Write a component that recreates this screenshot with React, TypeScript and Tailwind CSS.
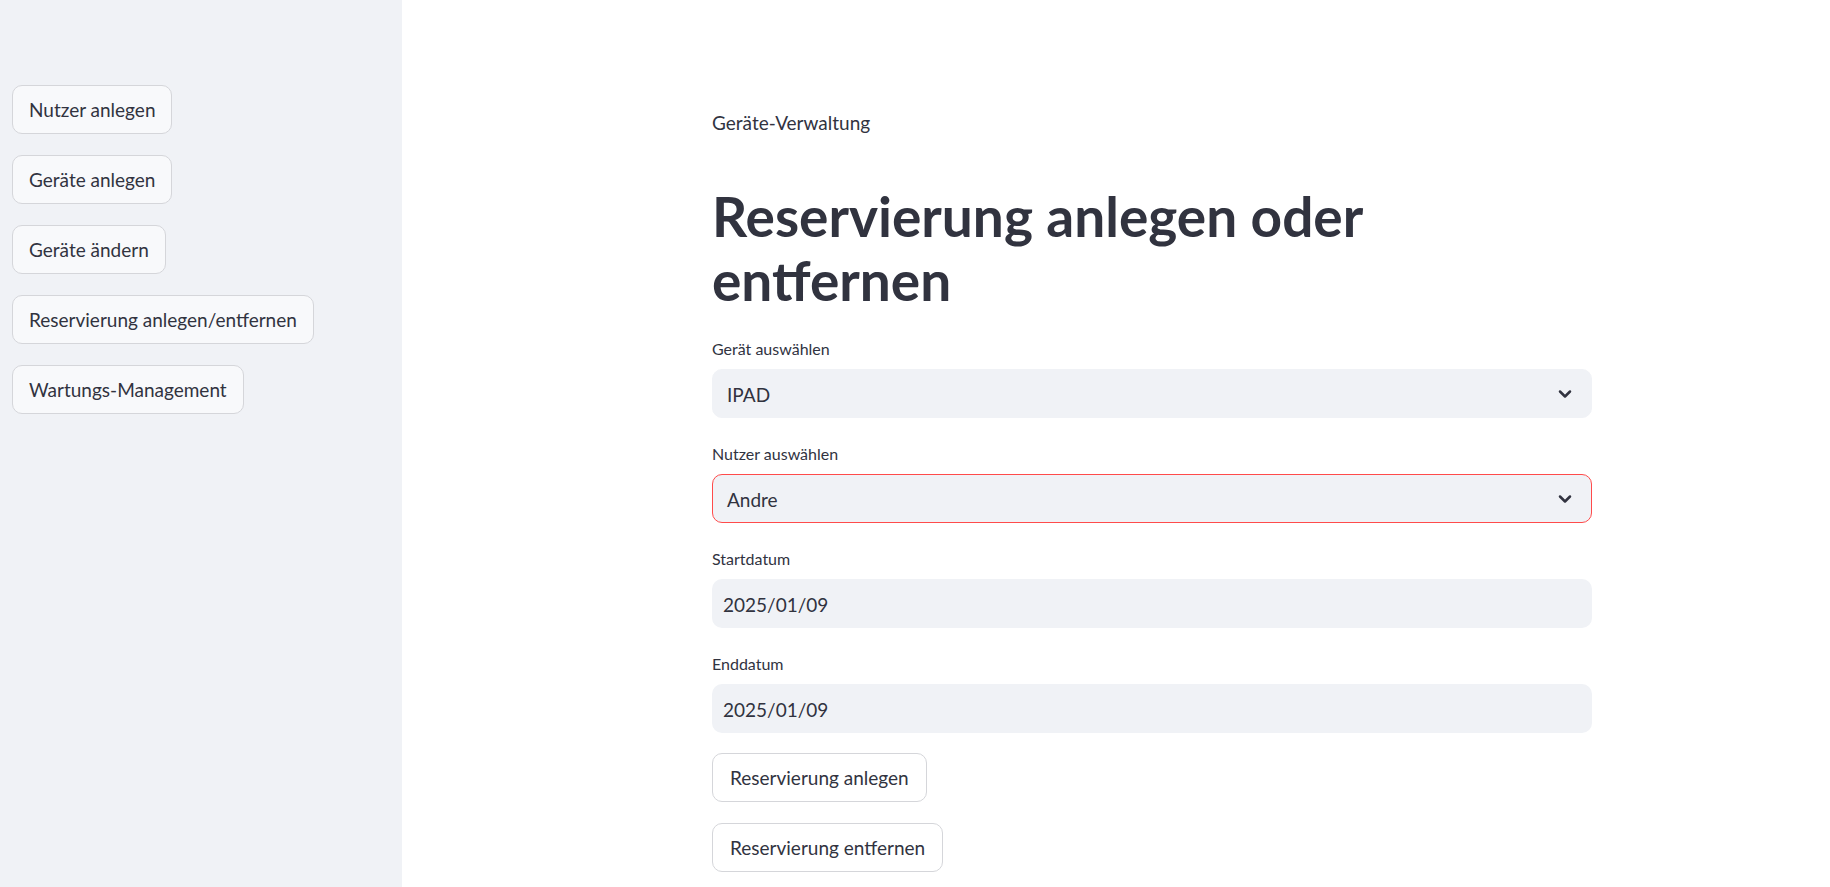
import { ChevronDown } from "lucide-react"

const font = { fontFamily: "Lato, 'Noto Sans', sans-serif" }

const navItems = [
  "Nutzer anlegen",
  "Geräte anlegen",
  "Geräte ändern",
  "Reservierung anlegen/entfernen",
  "Wartungs-Management",
]

function SelectBox({ label, value, error }: { label: string; value: string; error?: boolean }) {
  return (
    <div className="flex flex-col">
      <label className="h-6 text-[16px] leading-6 text-[#31333f]">{label}</label>
      <div
        className={`mt-2 flex h-[49px] items-center justify-between rounded-[10px] border bg-[#f0f2f6] pl-[14px] pr-[16px] pt-[3px] text-[19px] text-[#31333f] ${
          error ? "border-[#ff4b4b]" : "border-[#f0f2f6]"
        }`}
      >
        <span>{value}</span>
        <ChevronDown className="-mt-[3px] h-5 w-5 text-[#31333f]" strokeWidth={3} />
      </div>
    </div>
  )
}

function DateBox({ label, value }: { label: string; value: string }) {
  return (
    <div className="flex flex-col">
      <label className="h-6 text-[16px] leading-6 text-[#31333f]">{label}</label>
      <div className="mt-2 flex h-[49px] items-center rounded-[10px] bg-[#f0f2f6] pl-[11px] pt-[3px] text-[19px] text-[#31333f]">
        {value}
      </div>
    </div>
  )
}

export default function App() {
  return (
    <div className="flex h-[887px] w-full bg-white" style={font}>
      {/* Sidebar */}
      <aside className="flex w-[402px] shrink-0 flex-col items-start gap-[21px] bg-[#f0f2f6] pl-3 pt-[85px]">
        {navItems.map((item) => (
          <button
            key={item}
            className="h-[49px] rounded-[10px] border border-[#d5d6da] bg-[#f8f9fb] px-[16px] pt-[2px] text-[19px] text-[#31333f]"
          >
            {item}
          </button>
        ))}
      </aside>

      {/* Main */}
      <main className="flex-1 pl-[310px]">
        <div className="flex w-[880px] flex-col">
          <p className="mt-[109px] h-7 text-[19px] leading-7 text-[#31333f]">Geräte-Verwaltung</p>
          <h1 className="mt-[47px] w-[700px] text-[55px] font-bold leading-[64px] text-[#31333f]">
            Reservierung anlegen oder entfernen
          </h1>
          <div className="mt-[25px] flex flex-col gap-6">
            <SelectBox label="Gerät auswählen" value="IPAD" />
            <SelectBox label="Nutzer auswählen" value="Andre" error />
            <DateBox label="Startdatum" value="2025/01/09" />
            <DateBox label="Enddatum" value="2025/01/09" />
          </div>
          <div className="mt-[20px] flex flex-col items-start gap-[21px]">
            <button className="h-[49px] rounded-[10px] border border-[#d5d6da] bg-white px-[17px] pt-[2px] text-[19px] text-[#31333f]">
              Reservierung anlegen
            </button>
            <button className="h-[49px] rounded-[10px] border border-[#d5d6da] bg-white px-[17px] pt-[2px] text-[19px] text-[#31333f]">
              Reservierung entfernen
            </button>
          </div>
        </div>
      </main>
    </div>
  )
}
